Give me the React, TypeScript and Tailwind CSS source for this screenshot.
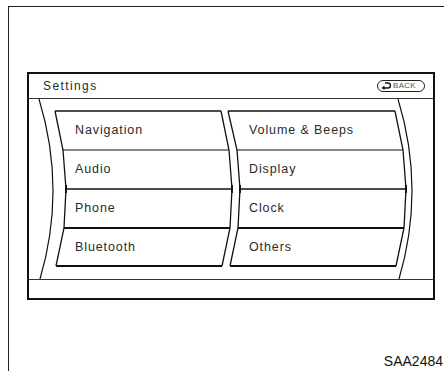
const leftItems = ["Navigation", "Audio", "Phone", "Bluetooth"];
const rightItems = ["Volume & Beeps", "Display", "Clock", "Others"];

// edge points per row boundary (y = 12, 51, 90, 129, 167)
const ys = [12, 51, 90, 129, 167];
const lLeft = [26, 34, 37, 35, 27];
const lRight = [192, 200, 203, 201, 193];
const rLeft = [199, 208, 211, 209, 201];
const rRight = [366, 374, 377, 375, 367];
const rowStroke = [1.4, 1.1, 1.3, 2, 2];

function pts(xs: number[]) {
  return xs.map((x, i) => `${x},${ys[i]}`).join(" ");
}

function Curves() {
  return (
    <svg
      className="absolute inset-0 pointer-events-none"
      width="404"
      height="180"
      viewBox="0 0 404 180"
      fill="none"
      stroke="#111"
    >
      {/* outer arcs */}
      <path d="M10 0 Q37.5 90 11 180" strokeWidth={1.2} />
      <path d="M369 0 Q396.5 90 370 180" strokeWidth={1.2} />

      {/* column edges */}
      <polyline points={pts(lLeft)} strokeWidth={1.3} />
      <polyline points={pts(lRight)} strokeWidth={1.3} />
      <polyline points={pts(rLeft)} strokeWidth={1.3} />
      <polyline points={pts(rRight)} strokeWidth={1.3} />

      {/* row lines */}
      {ys.map((y, i) => (
        <g key={y} strokeWidth={rowStroke[i]}>
          <line x1={lLeft[i]} y1={y} x2={lRight[i]} y2={y} />
          <line x1={rLeft[i]} y1={y} x2={rRight[i]} y2={y} />
        </g>
      ))}

      {/* small heavy marks at the middle */}
      <g strokeWidth={1.9}>
        <line x1={37} y1={86} x2={37} y2={94} />
        <line x1={203} y1={86} x2={203} y2={94} />
        <line x1={211} y1={86} x2={211} y2={94} />
        <line x1={377} y1={86} x2={377} y2={94} />
      </g>
    </svg>
  );
}

function BackButton() {
  return (
    <div className="flex h-[12px] w-[48px] items-center gap-[2px] rounded-full border border-[#222] pl-[3px]">
      <svg width="10" height="8" viewBox="0 0 10 8" fill="none">
        <path d="M3 6 H7 A2.5 2.5 0 0 0 7 1 H4" stroke="#111" strokeWidth={1.4} />
        <path d="M0.5 6 L3.5 3.5 L3.5 8 Z" fill="#111" />
      </svg>
      <span className="text-[8px] leading-none tracking-[0.3px] text-[#555]">BACK</span>
    </div>
  );
}

export default function App() {
  return (
    <div
      className="h-[371px] w-[444px] overflow-hidden bg-white pl-[8px] pt-[6px]"
      style={{ fontFamily: '"Liberation Sans", Arial, sans-serif' }}
    >
      <div className="flex h-[365px] flex-col border-l border-t border-[#222]">
        {/* screen */}
        <div className="ml-[18px] mt-[65px] flex h-[228px] w-[408px] flex-col border-2 border-[#111]">
          {/* header */}
          <div className="flex h-[25px] items-center justify-between border-b border-[#333] pl-[14px] pr-[8px]">
            <span className="text-[12px] tracking-[1.4px] text-[#2a2a2a]">Settings</span>
            <BackButton />
          </div>

          {/* menu */}
          <div className="relative h-[180px]">
            <Curves />
            <div className="relative grid grid-cols-[174px_1fr] pl-[46px] pt-[12px]">
              {[0, 1, 2, 3].map((i) => (
                <div key={i} className="contents">
                  <div className="flex h-[39px] items-center text-[12.5px] tracking-[0.9px] text-[#2a2a2a]">
                    {leftItems[i]}
                  </div>
                  <div className="flex h-[39px] items-center text-[12.5px] tracking-[0.9px] text-[#2a2a2a]">
                    {rightItems[i]}
                  </div>
                </div>
              ))}
            </div>
          </div>

          {/* status bar */}
          <div className="flex-1 border-t border-[#333]" />
        </div>

        <div className="mt-auto flex justify-end pb-[2px] pr-[1px]">
          <span className="text-[14px] leading-[16px] text-[#111]">SAA2484</span>
        </div>
      </div>
    </div>
  );
}
